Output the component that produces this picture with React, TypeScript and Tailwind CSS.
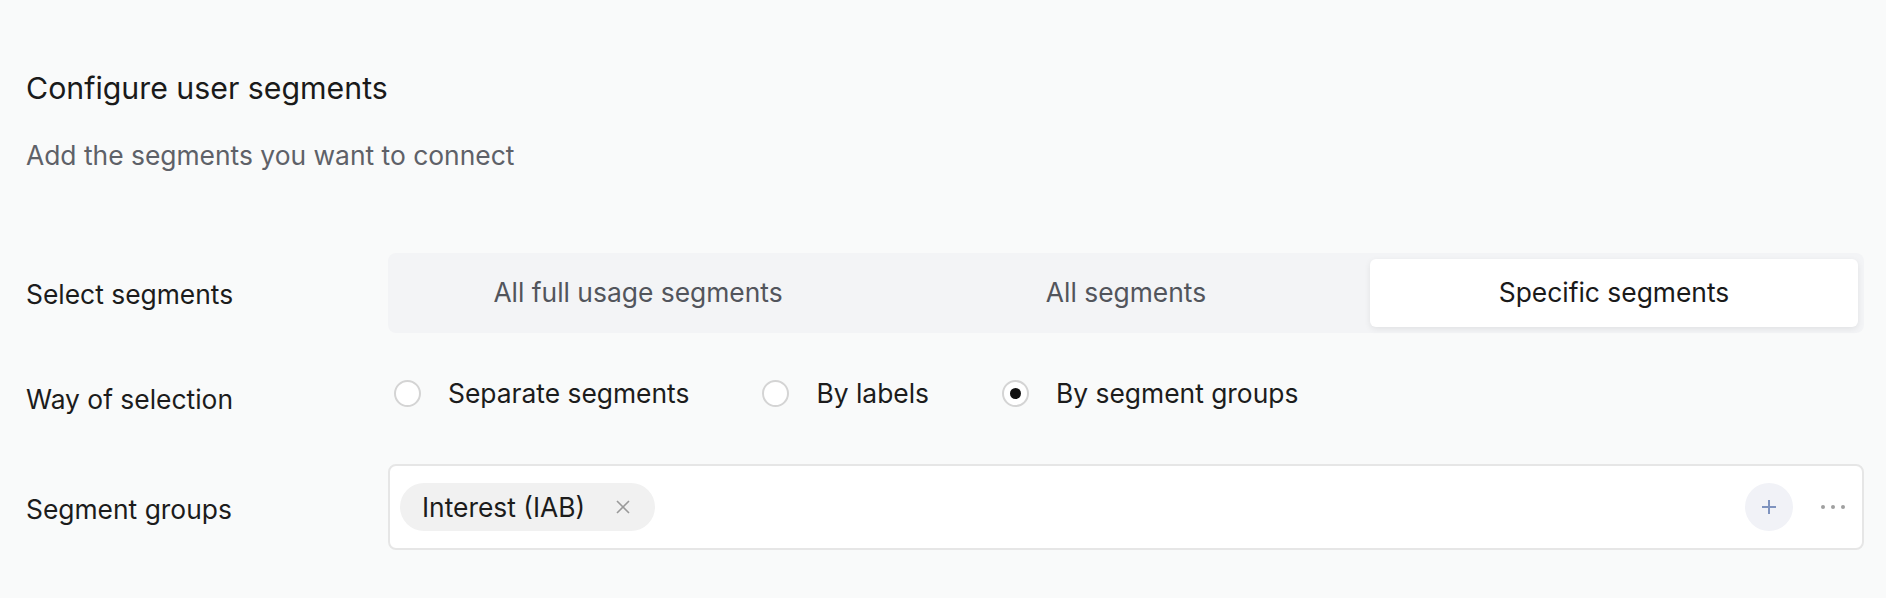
import React from "react";

const font = { fontFamily: "Inter, 'Noto Sans', sans-serif" };

function Radio({ checked, label }: { checked?: boolean; label: string }) {
  return (
    <div className="flex items-center gap-[27px]">
      <span className="flex h-[27px] w-[27px] items-center justify-center rounded-full border-2 border-[#d4d4d4] bg-white">
        {checked && <span className="h-[11px] w-[11px] rounded-full bg-[#111111]" />}
      </span>
      <span className="text-[26.4px] leading-[32px] text-[#1c1c1c]">{label}</span>
    </div>
  );
}

export default function App() {
  return (
    <div className="min-h-screen w-full bg-[#f9fafa] pl-[26px] pr-[22px] pt-[70px]" style={font}>
      <h1 className="text-[30.3px] font-normal leading-[36px] text-[#1a1a1a]">Configure user segments</h1>
      <p className="mt-[33px] text-[26.4px] leading-[32px] text-[#5e6168]">Add the segments you want to connect</p>

      <div className="mt-[82px] flex items-center">
        <div className="w-[362px] pt-[2px] text-[26.4px] leading-[32px] text-[#1c1c1c]">Select segments</div>
        <div className="grid h-[80px] flex-1 grid-cols-3 rounded-[8px] bg-[#f3f4f6] p-[6px]">
          <div className="flex items-center justify-center text-[26.4px] text-[#52555c]">All full usage segments</div>
          <div className="flex items-center justify-center text-[26.4px] text-[#52555c]">All segments</div>
          <div className="flex items-center justify-center rounded-[6px] bg-white text-[26.4px] text-[#1a1a1a] shadow-[0_2px_6px_rgba(0,0,0,0.08)]">
            Specific segments
          </div>
        </div>
      </div>

      <div className="mt-[36px] flex h-[48px] items-center">
        <div className="w-[362px] pt-[12px] text-[26.4px] leading-[32px] text-[#1c1c1c]">Way of selection</div>
        <div className="flex items-center gap-[73px] pl-[6px]">
          <Radio label="Separate segments" />
          <Radio label="By labels" />
          <Radio checked label="By segment groups" />
        </div>
      </div>

      <div className="mt-[47px] flex items-center">
        <div className="w-[362px] pt-[4px] text-[26.4px] leading-[32px] text-[#1c1c1c]">Segment groups</div>
        <div className="flex h-[86px] flex-1 items-center rounded-[8px] border-2 border-[#e6e6e6] bg-white pl-[10px] pr-[17px]">
          <div className="flex h-[48px] items-center gap-[31px] rounded-full bg-[#f1f1f1] pl-[22px] pr-[25px]">
            <span className="text-[26.4px] leading-[32px] text-[#1c1c1c]">Interest (IAB)</span>
            <svg width="14" height="14" viewBox="0 0 14 14" fill="none">
              <path d="M1 1L13 13M13 1L1 13" stroke="#9a9a9a" strokeWidth="1.6" />
            </svg>
          </div>
          <div className="flex-1" />
          <div className="flex h-[48px] w-[48px] items-center justify-center rounded-full bg-[#f1f2f7]">
            <svg width="16" height="16" viewBox="0 0 16 16" fill="none">
              <path d="M8 1V15M1 8H15" stroke="#7f93bf" strokeWidth="2" />
            </svg>
          </div>
          <div className="ml-[28px] flex items-center gap-[6px]">
            <span className="h-[4px] w-[4px] rounded-full bg-[#a0a0a0]" />
            <span className="h-[4px] w-[4px] rounded-full bg-[#a0a0a0]" />
            <span className="h-[4px] w-[4px] rounded-full bg-[#a0a0a0]" />
          </div>
        </div>
      </div>
    </div>
  );
}
